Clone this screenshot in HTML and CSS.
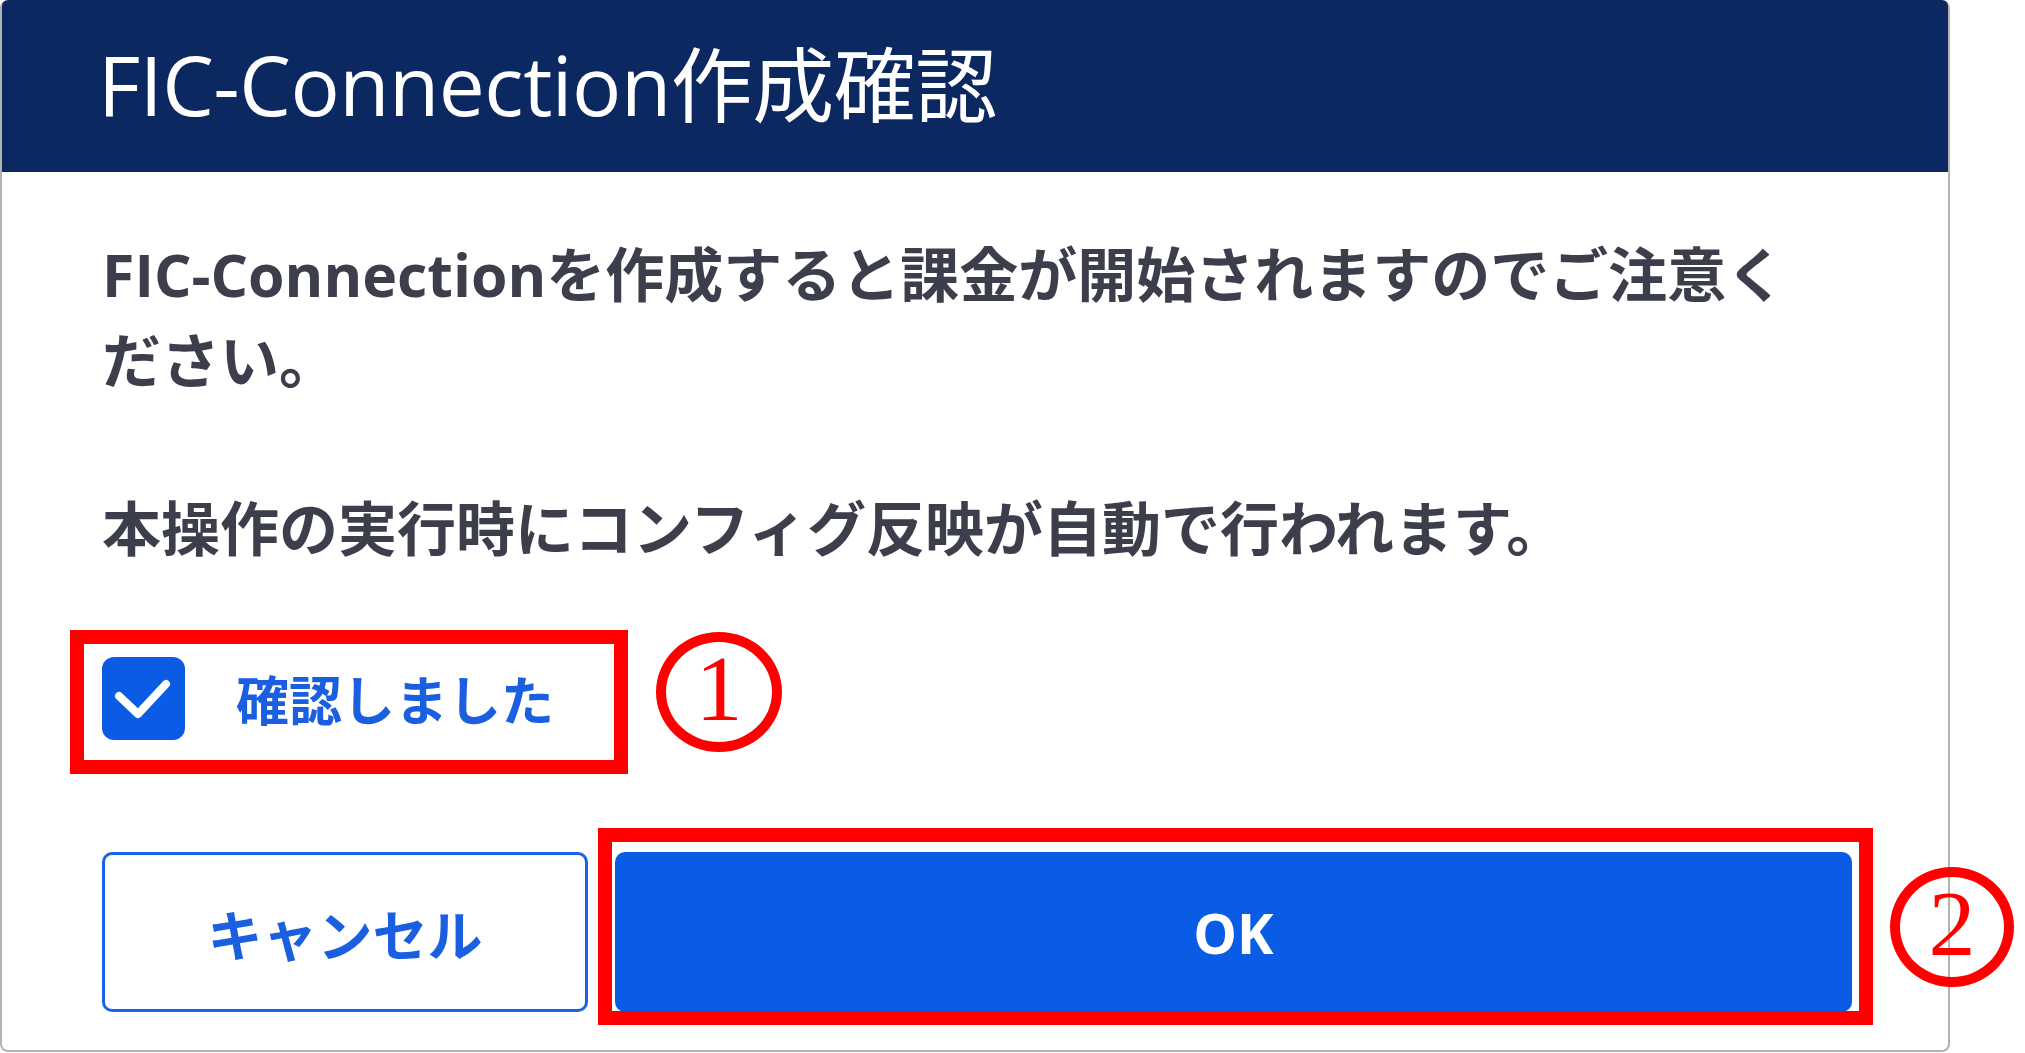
FILE: index.html
```html
<!DOCTYPE html>
<html lang="ja">
  <head>
    <meta charset="UTF-8" />
    <meta name="viewport" content="width=device-width, initial-scale=1.0" />
    <title>FIC-Connection作成確認</title>
    <link rel="stylesheet" href="styles.css">
  </head>
  <body>
    <div class="dialog">
      <div class="dialog-header">
        <h1 class="dialog-title">FIC-Connection作成確認</h1>
      </div>
      <div class="dialog-body">
        <p class="message">FIC-Connectionを作成すると課金が開始されますのでご注意ください。</p>
        <p class="message">本操作の実行時にコンフィグ反映が自動で行われます。</p>

        <label class="confirm">
          <span class="checkbox">
            <svg viewBox="0 0 83 83" width="83" height="83">
              <polyline points="17,39 36,57 64,27" fill="none" stroke="#fff" stroke-width="8" stroke-linecap="round" stroke-linejoin="round" />
            </svg>
          </span>
          <span class="confirm-text">確認しました</span>
          <span class="mark-box mark-confirm"></span>
          <span class="mark-num mark-num-1">1</span>
        </label>

        <div class="actions">
          <button class="btn btn-cancel">キャンセル</button>
          <div class="ok-wrap">
            <button class="btn btn-ok">OK</button>
            <span class="mark-box mark-ok"></span>
            <span class="mark-num mark-num-2">2</span>
          </div>
        </div>
      </div>
    </div>
  </body>
</html>
```

FILE: styles.css
```css
body {
  margin: 0;
  background: #fff;
  font-family: "Open Sans", "Noto Sans CJK JP", sans-serif;
}
.dialog {
  width: 1950px;
  box-sizing: border-box;
  border: 2px solid #b2b2b2;
  border-top: none;
  border-radius: 8px;
  background: #fff;
}
.dialog-header {
  height: 172px;
  box-sizing: border-box;
  display: flex;
  align-items: center;
  background: #0b2860;
  border-radius: 6px 6px 0 0;
  padding: 0 0 12px 96px;
}
.dialog-title {
  margin: 0;
  font-size: 82px;
  font-weight: 400;
  color: #fff;
  letter-spacing: -0.5px;
}
.dialog-body {
  padding: 59px 96px 38px 100px;
}
.message {
  margin: 0;
  max-width: 1720px;
  font-size: 59px;
  line-height: 86px;
  font-weight: 700;
  color: #3c3f4b;
}
.message + .message {
  margin-top: 82px;
}
.confirm {
  position: relative;
  display: flex;
  align-items: center;
  gap: 51px;
  width: fit-content;
  height: 83px;
  margin-top: 86px;
}
.checkbox {
  width: 83px;
  height: 83px;
  border-radius: 12px;
  background: #0a5ce4;
  display: block;
}
.checkbox svg {
  display: block;
}
.confirm-text {
  font-size: 53px;
  font-weight: 700;
  color: #1a5fe0;
}
.actions {
  display: flex;
  gap: 27px;
  margin-top: 112px;
}
.btn {
  height: 160px;
  border-radius: 10px;
  font-family: "Open Sans", "Noto Sans CJK JP", sans-serif;
  font-size: 55px;
  font-weight: 700;
  cursor: pointer;
}
.btn-cancel {
  width: 486px;
  background: #fff;
  color: #1a5fe0;
  border: 3px solid #1a62e8;
}
.ok-wrap {
  position: relative;
  flex: 1;
  display: flex;
}
.btn-ok {
  flex: 1;
  background: #0a5ce4;
  color: #fff;
  border: none;
}

/* annotations */
.mark-box {
  position: absolute;
  box-sizing: border-box;
  border: 14px solid #f00;
}
.mark-confirm {
  left: -32px;
  top: -27px;
  width: 558px;
  height: 144px;
}
.mark-ok {
  left: -17px;
  top: -24px;
  right: -21px;
  bottom: -13px;
}
.mark-num {
  position: absolute;
  box-sizing: border-box;
  width: 126px;
  height: 120px;
  border: 10px solid #f00;
  border-radius: 50%;
  display: flex;
  align-items: center;
  justify-content: center;
  padding-bottom: 8px;
  font-family: "Liberation Serif", serif;
  font-size: 94px;
  line-height: 1;
  color: #f00;
}
.mark-num-1 {
  left: 554px;
  top: -25px;
}
.mark-num-2 {
  left: calc(100% + 38px);
  top: 15px;
  width: 124px;
}
```
